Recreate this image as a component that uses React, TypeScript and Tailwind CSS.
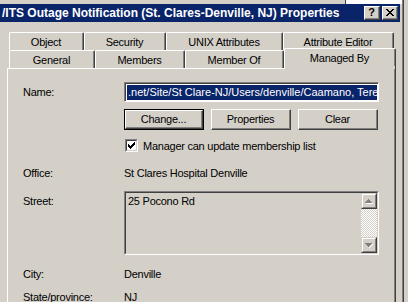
import React from "react";

function TitleBtn({ children }: { children: React.ReactNode }) {
  return (
    <div className="w-[16px] h-[14px] shrink-0 bg-[#d4d0c8] border-t border-l border-t-white border-l-white border-r border-b border-r-[#404040] border-b-[#404040]">
      <div className="w-full h-full border-r border-b border-r-[#808080] border-b-[#808080] flex items-center justify-center">
        {children}
      </div>
    </div>
  );
}

function Tab({ label, w, selected }: { label: string; w: string; selected?: boolean }) {
  return (
    <div
      className={`${w} ${selected ? "relative z-10 -mt-[2px] h-[21px] bg-[#d4d0c8] pb-[3px]" : "h-full"} shrink-0 border-t border-l border-t-white border-l-white border-r border-r-[#404040] rounded-tl-[2px] rounded-tr-[2px] flex`}
    >
      <div className="flex-1 border-r border-r-[#808080] flex items-center justify-center leading-none pt-[1px]">
        {label}
      </div>
    </div>
  );
}

function Btn({ label, def }: { label: string; def?: boolean }) {
  const inner = (
    <div className="h-full border-t border-l border-t-white border-l-white border-r border-b border-r-[#404040] border-b-[#404040]">
      <div className="h-full border-r border-b border-r-[#808080] border-b-[#808080] flex items-center justify-center">
        {label}
      </div>
    </div>
  );
  return def ? (
    <div className="w-[80px] h-[21px] shrink-0 border border-black">{inner}</div>
  ) : (
    <div className="w-[80px] h-[21px] shrink-0">{inner}</div>
  );
}

function ScrollBtn({ up }: { up?: boolean }) {
  return (
    <div className="w-[16px] h-[16px] shrink-0 bg-[#d4d0c8] border-t border-l border-t-[#d4d0c8] border-l-[#d4d0c8] border-r border-b border-r-[#404040] border-b-[#404040]">
      <div className="w-full h-full border-t border-l border-t-white border-l-white border-r border-b border-r-[#808080] border-b-[#808080] flex items-center justify-center">
        <svg width="8" height="5" viewBox="0 0 8 5" shapeRendering="crispEdges">
          {up ? (
            <>
              <rect x="4" y="1" width="1" height="1" fill="#fff" />
              <rect x="5" y="2" width="1" height="1" fill="#fff" />
              <rect x="6" y="3" width="1" height="1" fill="#fff" />
              <rect x="1" y="4" width="7" height="1" fill="#fff" />
              <rect x="3" y="0" width="1" height="1" fill="#808080" />
              <rect x="2" y="1" width="3" height="1" fill="#808080" />
              <rect x="1" y="2" width="5" height="1" fill="#808080" />
              <rect x="0" y="3" width="7" height="1" fill="#808080" />
            </>
          ) : (
            <>
              <rect x="7" y="1" width="1" height="1" fill="#fff" />
              <rect x="6" y="2" width="1" height="1" fill="#fff" />
              <rect x="5" y="3" width="1" height="1" fill="#fff" />
              <rect x="4" y="4" width="1" height="1" fill="#fff" />
              <rect x="0" y="0" width="7" height="1" fill="#808080" />
              <rect x="1" y="1" width="5" height="1" fill="#808080" />
              <rect x="2" y="2" width="3" height="1" fill="#808080" />
              <rect x="3" y="3" width="1" height="1" fill="#808080" />
            </>
          )}
        </svg>
      </div>
    </div>
  );
}

export default function App() {
  return (
    <div className="w-[408px] h-[302px] overflow-hidden bg-[#d4d0c8] text-black font-['Liberation_Sans',Arial,sans-serif] text-[11px] leading-[14px] tracking-[-0.25px] flex">
      <div className="w-[402px] shrink-0 flex flex-col">
        {/* top frame */}
        <div className="h-[4px] shrink-0 flex">
          <div className="w-[345px]" />
          <div className="flex-1 bg-white border-l border-l-[#404040]" />
        </div>
        {/* title bar */}
        <div className="h-[18px] shrink-0 w-[400px] bg-[#0a246a] flex items-center pl-[2px] pr-[2px]">
          <div className="flex-1 text-white font-bold text-[12px] tracking-normal whitespace-nowrap leading-none">
            /ITS Outage Notification (St. Clares-Denville, NJ) Properties
          </div>
          <TitleBtn>
            <span className="font-bold text-[11px] tracking-normal leading-none text-black">?</span>
          </TitleBtn>
          <div className="w-[2px]" />
          <TitleBtn>
            <svg width="8" height="7" viewBox="0 0 8 7" shapeRendering="crispEdges">
              <path d="M0 0h2v1h-2zM6 0h2v1h-2zM1 1h2v1h-2zM5 1h2v1h-2zM2 2h4v1h-4zM3 3h2v1h-2zM2 4h4v1h-4zM1 5h2v1h-2zM5 5h2v1h-2zM0 6h2v1h-2zM6 6h2v1h-2z" fill="#000" />
            </svg>
          </TitleBtn>
        </div>
        {/* tabs */}
        <div className="mt-[10px] shrink-0 flex flex-col">
          <div className="h-[18px] shrink-0 flex pl-[9px]">
            <Tab label="Object" w="w-[75px]" />
            <Tab label="Security" w="w-[82px]" />
            <Tab label="UNIX Attributes" w="w-[117px]" />
            <Tab label="Attribute Editor" w="w-[111px]" />
          </div>
          <div className="h-[18px] shrink-0 flex pl-[9px]">
            <Tab label="General" w="w-[86px]" />
            <Tab label="Members" w="w-[90px]" />
            <Tab label="Member Of" w="w-[99px]" />
            <Tab label="Managed By" w="w-[112px]" selected />
          </div>
        </div>
        {/* panel */}
        <div className="ml-[7px] w-[389px] flex-1 min-h-0 overflow-hidden border-t border-l border-t-white border-l-white border-r border-r-[#404040]">
          <div className="h-full border-r border-r-[#808080] pl-[15px] pt-[13px] flex flex-col">
            {/* Name */}
            <div className="flex items-center h-[20px] shrink-0">
              <div className="w-[101px]">Name:</div>
              <div className="w-[255px] h-[20px] border-t border-l border-t-[#808080] border-l-[#808080] border-r border-b border-r-white border-b-white">
                <div className="h-full border-t border-l border-t-[#404040] border-l-[#404040] bg-white p-[1px]">
                  <div className="h-full bg-[#0a246a] text-white whitespace-nowrap overflow-hidden leading-[15px] pl-[1px] tracking-normal">
                    .net/Site/St Clare-NJ/Users/denville/Caamano, Teresa
                  </div>
                </div>
              </div>
            </div>
            {/* Buttons */}
            <div className="flex shrink-0 mt-[7px] ml-[101px] gap-[7px]">
              <Btn label="Change..." def />
              <Btn label="Properties" />
              <Btn label="Clear" />
            </div>
            {/* checkbox */}
            <div className="flex shrink-0 items-center mt-[9px] ml-[102px] h-[13px]">
              <div className="w-[13px] h-[13px] border-t border-l border-t-[#808080] border-l-[#808080] border-r border-b border-r-white border-b-white">
                <div className="w-full h-full border-t border-l border-t-[#404040] border-l-[#404040] border-r border-b border-r-[#d4d0c8] border-b-[#d4d0c8] bg-white flex items-center justify-center">
                  <svg width="7" height="7" viewBox="0 0 7 7" shapeRendering="crispEdges">
                    <path d="M6 0h1v1h-1zM5 1h2v1h-2zM0 2h1v1h-1zM4 2h3v1h-3zM0 3h2v1h-2zM3 3h3v1h-3zM0 4h5v1h-5zM1 5h3v1h-3zM2 6h1v1h-1z" fill="#000" />
                  </svg>
                </div>
              </div>
              <div className="ml-[5px]">Manager can update membership list</div>
            </div>
            {/* Office */}
            <div className="flex shrink-0 items-center mt-[14px] h-[14px]">
              <div className="w-[101px]">Office:</div>
              <div>St Clares Hospital Denville</div>
            </div>
            {/* Street */}
            <div className="flex shrink-0 mt-[11px]">
              <div className="w-[101px] pt-[3px]">Street:</div>
              <div className="w-[255px] h-[64px] border-t border-l border-t-[#808080] border-l-[#808080] border-r border-b border-r-white border-b-white">
                <div className="h-full border-t border-l border-t-[#404040] border-l-[#404040] border-r border-b border-r-[#d4d0c8] border-b-[#d4d0c8] flex">
                  <div className="flex-1 pl-[2px] pt-[1px]">25 Pocono Rd</div>
                  <div className="w-[16px] flex flex-col">
                    <ScrollBtn up />
                    <div className="flex-1 bg-[repeating-conic-gradient(#ffffff_0_25%,#d4d0c8_0_50%)] bg-[length:2px_2px]" />
                    <ScrollBtn />
                  </div>
                </div>
              </div>
            </div>
            {/* City */}
            <div className="flex shrink-0 items-center mt-[12px] h-[14px]">
              <div className="w-[101px]">City:</div>
              <div>Denville</div>
            </div>
            <div className="flex shrink-0 items-center mt-[9px] h-[14px]">
              <div className="w-[101px]">State/province:</div>
              <div>NJ</div>
            </div>
          </div>
        </div>
      </div>
      {/* right frame */}
      <div className="w-[2px] shrink-0 flex">
        <div className="w-[1px] bg-[#808080]" />
        <div className="w-[1px] bg-[#404040]" />
      </div>
    </div>
  );
}
